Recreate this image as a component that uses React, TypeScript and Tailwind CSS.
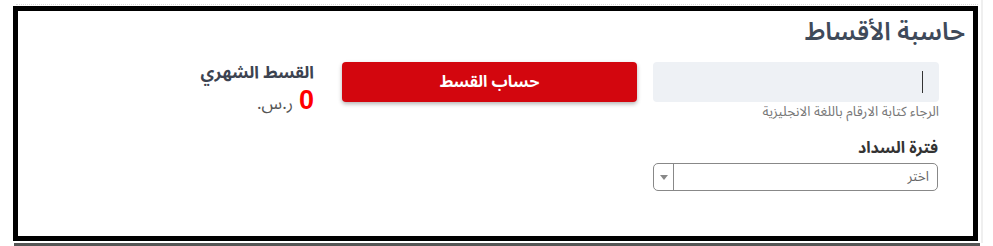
const arabic = { fontFamily: '"Noto Sans Arabic", "DejaVu Sans", sans-serif' };

function ResultBox() {
  return (
    <div className="flex flex-col items-start">
      <div className="text-[17px] leading-[22px] font-bold text-[#3c4350]">القسط الشهري</div>
      <div className="flex items-center gap-[6px] mt-[3px] h-[26px]">
        <span className="text-[27px] leading-[26px] font-bold text-[#ff0000]" style={{ fontFamily: '"Liberation Sans", sans-serif' }}>0</span>
        <span className="text-[17px] leading-[20px] mt-[8px] text-[#555]">ر.س.</span>
      </div>
    </div>
  );
}

export default function App() {
  return (
    <div className="w-[993px] h-[246px] bg-white overflow-hidden" style={arabic}>
      <div className="ml-[13px] w-[970px] h-[243px] border-r-2 border-[#efefef]">
        <div className="h-[4px]" />
        <div className="ml-[3px] w-[962px] border-t border-dotted border-[#dcdcdc]" />
        <div dir="rtl" className="mt-[1px] w-[965px] h-[235px] border-[5px] border-black bg-white">
          <h2 className="pr-[8px] pt-[5px] text-[25px] leading-[32px] font-semibold text-[#3f4a5a]">حاسبة الأقساط</h2>

          <div className="flex items-start mt-[14px] pr-[34px]">
            <div className="w-[286px] flex flex-col">
              <div className="h-[40px] rounded-[4px] bg-[#eef1f5] flex items-center pr-[16px]">
                <span className="w-px h-[22px] bg-[#333]" />
              </div>
              <p className="mt-[1px] text-[13.5px] leading-[17px] text-[#777]">الرجاء كتابة الارقام باللغة الانجليزية</p>
            </div>

            <button className="mr-[16px] w-[295px] h-[40px] rounded-[4px] bg-[#d3060e] text-white text-[16px] font-bold shadow-[0_2px_4px_rgba(0,0,0,0.3)]">
              حساب القسط
            </button>

            <div className="mr-[28px]">
              <ResultBox />
            </div>
          </div>

          <div className="pr-[35px] mt-[18px]">
            <label className="block text-[16px] leading-[20px] font-bold text-[#333]">فترة السداد</label>
            <div className="mt-[5px] w-[285px] h-[28px] rounded-[5px] border border-[#888] flex items-center">
              <span className="flex-1 pr-[8px] text-[13.5px] leading-[18px] text-[#666]">اختر</span>
              <span className="w-[20px] h-full border-r border-[#888] flex items-center justify-center">
                <span className="w-0 h-0 border-l-[4px] border-r-[4px] border-t-[5px] border-l-transparent border-r-transparent border-t-[#888]" />
              </span>
            </div>
          </div>
        </div>
        <div className="ml-[1px] mt-[2px] w-[966px] h-[3px] bg-[#555]" />
      </div>
    </div>
  );
}
